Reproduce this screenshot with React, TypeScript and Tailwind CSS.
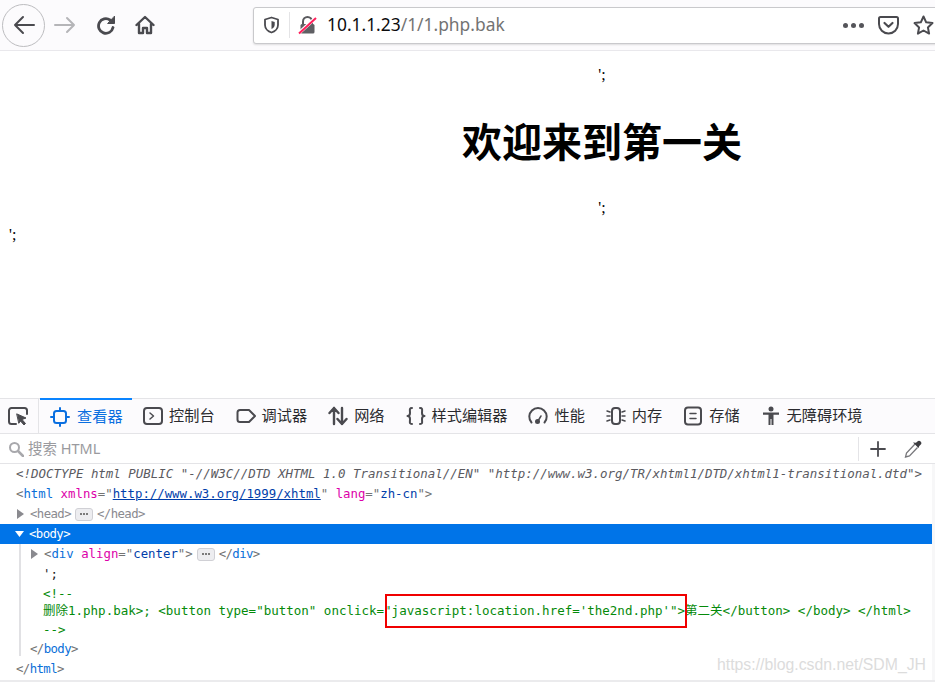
const mono = "font-['DejaVu_Sans_Mono','Noto_Sans_CJK_SC',monospace]";

const Ico = ({ w = 20, h = 20, box = "0 0 20 20", children, stroke = "#4a4a4f", sw = 2 }: any) => (
  <svg width={w} height={h} viewBox={box} fill="none" stroke={stroke} strokeWidth={sw} strokeLinecap="round" strokeLinejoin="round" className="shrink-0">
    {children}
  </svg>
);

const tabs: { label: string; icon: any; active?: boolean }[] = [
  {
    label: "查看器",
    active: true,
    icon: (
      <Ico stroke="#0a6fe0">
        <rect x="4" y="4" width="12" height="12" rx="2.5" />
        <path d="M10 1v3M10 16v3M1 10h3M16 10h3" />
      </Ico>
    ),
  },
  {
    label: "控制台",
    icon: (
      <Ico>
        <rect x="1" y="2" width="18" height="16" rx="3" />
        <path d="M7 7l3.5 3L7 13" strokeWidth="1.5" />
      </Ico>
    ),
  },
  {
    label: "调试器",
    icon: (
      <Ico>
        <path d="M4 4h9l6 6-6 6H4a2.5 2.5 0 0 1-2.5-2.5v-7A2.5 2.5 0 0 1 4 4z" />
      </Ico>
    ),
  },
  {
    label: "网络",
    icon: (
      <Ico sw={2.4}>
        <path d="M6 18V2M1.5 7L6 2l4.500 5M14 2v16M9.500 13l4.500 5 4.500-5" />
      </Ico>
    ),
  },
  {
    label: "样式编辑器",
    icon: (
      <Ico>
        <path d="M6 2C3 2 4 4 4 7c0 2-1 3-2.500 3C3 10 4 11 4 13c0 3-1 5 2 5M14 2c3 0 2 2 2 5 0 2 1 3 2.500 3-1.500 0-2.500 1-2.500 3 0 3 1 5-2 5" />
      </Ico>
    ),
  },
  {
    label: "性能",
    icon: (
      <Ico>
        <path d="M3.500 16.500A8.700 8.700 0 1 1 16.500 16.500" />
        <circle cx="9.500" cy="15.500" r="2.500" fill="#4a4a4f" stroke="none" />
        <path d="M10 15l3-5" strokeWidth="1.500" />
      </Ico>
    ),
  },
  {
    label: "内存",
    icon: (
      <Ico>
        <rect x="6" y="2" width="8" height="16" rx="3" />
        <path d="M1 5l3 1M1 10h3M1 15l3-1M19 5l-3 1M19 10h-3M19 15l-3-1" strokeWidth="1.500" />
      </Ico>
    ),
  },
  {
    label: "存储",
    icon: (
      <Ico>
        <rect x="2" y="1.500" width="16" height="17" rx="3" />
        <path d="M7 7.500h6M7 12.500h6" strokeWidth="1.500" />
      </Ico>
    ),
  },
  {
    label: "无障碍环境",
    icon: (
      <svg width="20" height="20" viewBox="0 0 20 20" fill="#4a4a4f" className="shrink-0">
        <circle cx="10" cy="3" r="2.500" />
        <path d="M2 6.500h16v2.200h-5.500V19h-2v-6h-1v6h-2V8.700H2z" />
      </svg>
    ),
  },
];

const Tag = ({ children }: any) => <span className="text-[#0a6fd8]">{children}</span>;
const P = ({ children }: any) => <span className="text-[#737373]">{children}</span>;
const Attr = ({ children }: any) => <span className="text-[#dd00a9]">{children}</span>;
const Val = ({ children }: any) => <span className="text-[#003eaa]">{children}</span>;

const Dots = () => (
  <span className="inline-flex h-[13px] w-[18px] mx-[4px] items-center justify-center gap-[1px] rounded-[3px] border border-[#d0d0d5] bg-[#ededf0] align-[-2px]">
    <i className="block size-[2px] rounded-full bg-[#555]" />
    <i className="block size-[2px] rounded-full bg-[#555]" />
    <i className="block size-[2px] rounded-full bg-[#555]" />
  </span>
);

const Row = ({ h = "h-[20px]", pl, children, className = "" }: any) => (
  <div className={`flex items-center ${h} ${pl} ${className}`}>
    <span className="flex items-center">{children}</span>
  </div>
);

const Twisty = ({ open, color = "#8a8a8f" }: any) => (
  <svg width="9" height="10" viewBox="0 0 9 10" fill={color} className="mr-[5px] shrink-0">
    {open ? <path d="M0 2h9L4.500 8z" /> : <path d="M1 0l7 5-7 5z" />}
  </svg>
);

const Narrow = ({ children }: any) => <span className="tracking-[-0.6px]">{children}</span>;

export default function App() {
  return (
    <div className="relative h-[683px] w-[935px] overflow-hidden bg-white font-['Noto_Sans','Noto_Sans_CJK_SC',sans-serif]">
      {/* browser toolbar */}
      <div className="flex h-[51px] items-center border-b border-[#e9e8ec] bg-[#fcfbfd] pl-[2px]">
        <div className="flex size-[43px] items-center justify-center rounded-full border border-[#bdbdc0] bg-[#fcfbfd]">
          <Ico w={24} h={24} box="0 0 24 24" sw={2}>
            <path d="M22 12H3M11 4l-8 8 8 8" />
          </Ico>
        </div>
        <div className="ml-[9px]">
          <Ico w={22} h={22} box="0 0 22 22" stroke="#b5b5b8">
            <path d="M1 11h19M13 4l7 7-7 7" />
          </Ico>
        </div>
        <div className="ml-[20px]">
          <Ico w={20} h={20} sw={2.800}>
            <path d="M17 12.500A7.300 7.300 0 1 1 14 5" />
            <path d="M18.500 1.500V8.500H12z" fill="#4a4a4f" strokeWidth="1" />
          </Ico>
        </div>
        <div className="ml-[19px]">
          <Ico w={20} h={20} sw={2.400}>
            <path d="M1.500 10L10 2l8.500 8M4 8.500V18h4v-5h4v5h4V8.500" />
          </Ico>
        </div>
        <div className="ml-[98px] flex h-[37px] min-w-0 flex-1 items-center -mr-[4px] rounded-l-[3px] border border-[#c9c9cc] bg-white pl-[9px] pr-[3px] shadow-[0_1px_2px_rgba(0,0,0,0.12)]">
          <Ico w={17} h={18} box="0 0 17 18" sw={1.800}>
            <path d="M8.500 1.500l6.500 2v5.500c0 3.500-3 6.500-6.500 7.500C5 15.500 2 12.500 2 9V3.500z" />
            <path d="M8.500 5v8c2-1 3.200-2.500 3.200-4.500V6z" fill="#4a4a4f" stroke="none" />
          </Ico>
          <div className="ml-[9px] h-[26px] w-px bg-[#e4e4e6]" />
          <div className="relative ml-[8px] h-[20px] w-[19px]">
            <svg width="19" height="20" viewBox="0 0 19 20" fill="none">
              <path d="M5 9V6.500a4.500 4.500 0 0 1 9 0V9" stroke="#5a5a5e" strokeWidth="2" />
              <rect x="2.500" y="9" width="14" height="9.500" rx="1.500" fill="#5f5f63" />
              <path d="M1 18L17.500 3" stroke="#fff" strokeWidth="3.500" />
              <path d="M1 18.500L18 3" stroke="#ff1f5a" strokeWidth="2" />
            </svg>
          </div>
          <div className="ml-[10px] text-[17.400px] leading-none text-[#0c0c0d]">
            10.1.1.23<span className="text-[#737373]">/1/1.php.bak</span>
          </div>
          <div className="ml-auto flex items-center">
            <div className="flex gap-[3px]">
              <i className="block size-[5px] rounded-full bg-[#55555a]" />
              <i className="block size-[5px] rounded-full bg-[#55555a]" />
              <i className="block size-[5px] rounded-full bg-[#55555a]" />
            </div>
            <div className="ml-[14px]">
              <Ico w={21} h={20} box="0 0 21 20">
                <path d="M2.500 2h16A1.500 1.500 0 0 1 20 3.500V9a9.500 9.500 0 0 1-19 0V3.500A1.500 1.500 0 0 1 2.500 2z" />
                <path d="M6.500 8l4 3.800 4-3.800" strokeWidth="2.200" />
              </Ico>
            </div>
            <div className="ml-[14px] mr-[1px]">
              <Ico w={21} h={20} box="0 0 21 20">
                <path d="M10.500 1.500l2.700 5.800 6.300.8-4.600 4.300 1.200 6.200-5.600-3.100-5.600 3.100 1.200-6.200L1.500 8.100l6.300-.8z" />
              </Ico>
            </div>
          </div>
        </div>
      </div>

      {/* page */}
      <div className="h-[347px] text-[#000]">
        <div className="ml-[269px] w-[666px] pt-[14px] text-center">
          <div className="h-[20px] text-[16px] font-['Liberation_Serif',serif] leading-[20px]">';</div>
          <h1 className="mt-[38px] text-[40px] font-bold leading-[40px] font-['Liberation_Sans','Noto_Sans_CJK_SC',sans-serif]">欢迎来到第一关</h1>
          <div className="mt-[35px] h-[20px] text-[16px] font-['Liberation_Serif',serif] leading-[20px]">';</div>
        </div>
        <div className="pl-[9px] pt-[7px] text-[16px] font-['Liberation_Serif',serif] leading-[20px]">';</div>
      </div>

      {/* devtools tabs */}
      <div className="flex h-[36px] items-stretch border-y border-[#e4e4e7] bg-[#fcfbfd] text-[15.200px] text-[#2a2a2e]">
        <div className="flex w-[39px] items-center border-r border-[#e4e4e7] pl-[8px]">
          <Ico>
            <path d="M8 18H3.500A2.500 2.500 0 0 1 1 15.500v-11A2.500 2.500 0 0 1 3.500 2h13A2.500 2.500 0 0 1 19 4.500V8" />
            <path d="M9 8l9 4-4 1.500 3.500 4-1.500 1.500-3.500-4L11 17z" fill="#4a4a4f" strokeWidth="1" />
          </Ico>
        </div>
        {tabs.map((t) =>
          t.active ? (
            <div key={t.label} className="-mt-px ml-px flex w-[92px] items-center gap-[7px] border-t-2 border-[#0a84ff] pl-[10px] text-[#0a6fe0]">
              {t.icon}
              <span className="leading-none">{t.label}</span>
            </div>
          ) : (
            <div key={t.label} className="ml-[11px] flex items-center gap-[6px] pr-[10px]">
              {t.icon}
              <span className="leading-none">{t.label}</span>
            </div>
          ),
        )}
      </div>

      {/* search */}
      <div className="flex h-[30px] items-center border-b border-[#e4e4e7] pl-[8px] text-[14.500px] text-[#9a9a9e]">
        <Ico w={16} h={16} box="0 0 16 16" stroke="#a8a8ac">
          <circle cx="6.500" cy="6.500" r="4.500" />
          <path d="M10 10l5 5" strokeWidth="2.500" />
        </Ico>
        <span className="ml-[4px] leading-none">搜索 HTML</span>
        <div className="ml-auto flex items-center pr-[13px]">
          <div className="h-[24px] w-px bg-[#e4e4e7]" />
          <div className="ml-[11px]">
            <Ico w={16} h={16} box="0 0 16 16" sw={1.800}>
              <path d="M8 1v14M1 8h14" />
            </Ico>
          </div>
          <div className="ml-[18px]">
            <svg width="18" height="20" viewBox="0 0 18 20" fill="none" className="shrink-0">
              <path d="M11 5L2.500 14l-1 4 4-1L13.500 8.500" stroke="#77777b" strokeWidth="1.300" fill="#fff" />
              <path d="M9 3.500l5.500 5.500 .8-2 1.300-1.200a2.200 2.200 0 0 0-3.200-3.200L12 3.800z" fill="#3c3c40" />
            </svg>
          </div>
        </div>
      </div>

      {/* markup tree */}
      <div className={`${mono} text-[12.350px] leading-[20px]`}>
        <Row pl="pl-[16px]" className="italic text-[12.450px] text-[#5a5a5f]">
          <span className="whitespace-pre">{'<!DOCTYPE html PUBLIC "-//W3C//DTD XHTML 1.0 Transitional//EN" "http://www.w3.org/TR/xhtml1/DTD/xhtml1-transitional.dtd">'}</span>
        </Row>
        <Row pl="pl-[16px]">
          <span className="whitespace-pre">
            <P>{"<"}</P><Tag>html</Tag> <Attr>xmlns</Attr><P>="</P>
            <span className="text-[#003eaa] underline">http://www.w3.org/1999/xhtml</span>
            <P>" </P><Attr>lang</Attr><P>="</P><Val>zh-cn</Val><P>{'">'}</P>
          </span>
        </Row>
        <Row pl="pl-[16px]" className="text-[#8a8a8f]">
          <Twisty /><Narrow>{"<head>"}</Narrow><Dots /><Narrow>{"</head>"}</Narrow>
        </Row>
        <Row pl="pl-[15px]" className="w-[932px] bg-[#0074e8] text-[#fff]">
          <Twisty open color="#fff" /><Narrow>{"<body>"}</Narrow>
        </Row>
        <div className="ml-[19px] border-l-2 border-[#e1e1e4]">
          <Row pl="pl-[9px]">
            <Twisty />
            <span className="whitespace-pre">
              <P>{"<"}</P><Tag>div</Tag> <Attr>align</Attr><P>="</P><Val>center</Val><P>{'">'}</P>
            </span>
            <Dots />
            <Narrow><P>{"</"}</P><Tag>div</Tag><P>{">"}</P></Narrow>
          </Row>
          <Row pl="pl-[22px]" className="text-[#222]">';</Row>
          <div className="pl-[22px] text-[12.500px] text-[#058a0a]">
            <Row h="h-[20px]">{"<!--"}</Row>
            <Row h="h-[14px]">
              <span className="whitespace-pre">{`删除1.php.bak>; <button type="button" onclick="javascript:location.href='the2nd.php'">第二关</button> </body> </html>`}</span>
            </Row>
            <Row h="h-[24px]">{"-->"}</Row>
          </div>
          <Row h="h-[14px]" pl="pl-[9px]">
            <Narrow><P>{"</"}</P><Tag>body</Tag><P>{">"}</P></Narrow>
          </Row>
        </div>
        <Row pl="pl-[16px]" className="mt-[3px]">
          <Narrow><P>{"</"}</P><Tag>html</Tag><P>{">"}</P></Narrow>
        </Row>
      </div>

      {/* annotation box drawn over the screenshot */}
      <div className="absolute left-[385px] top-[594px] h-[34px] w-[302px] border-2 border-[#f00000]" />
      <div className="absolute left-0 top-[680px] h-[2px] w-[935px] bg-[#ebebed]" />
      <div className="absolute left-[932px] top-[464px] h-[216px] w-[3px] bg-[#f7f7f8]" />
      {/* watermark */}
      <div className="absolute left-[717px] top-[655px] text-[15.800px] leading-[20px] text-[#dcdcdc] font-['Liberation_Sans',sans-serif]">
        https://blog.csdn.net/SDM_JH
      </div>
    </div>
  );
}
